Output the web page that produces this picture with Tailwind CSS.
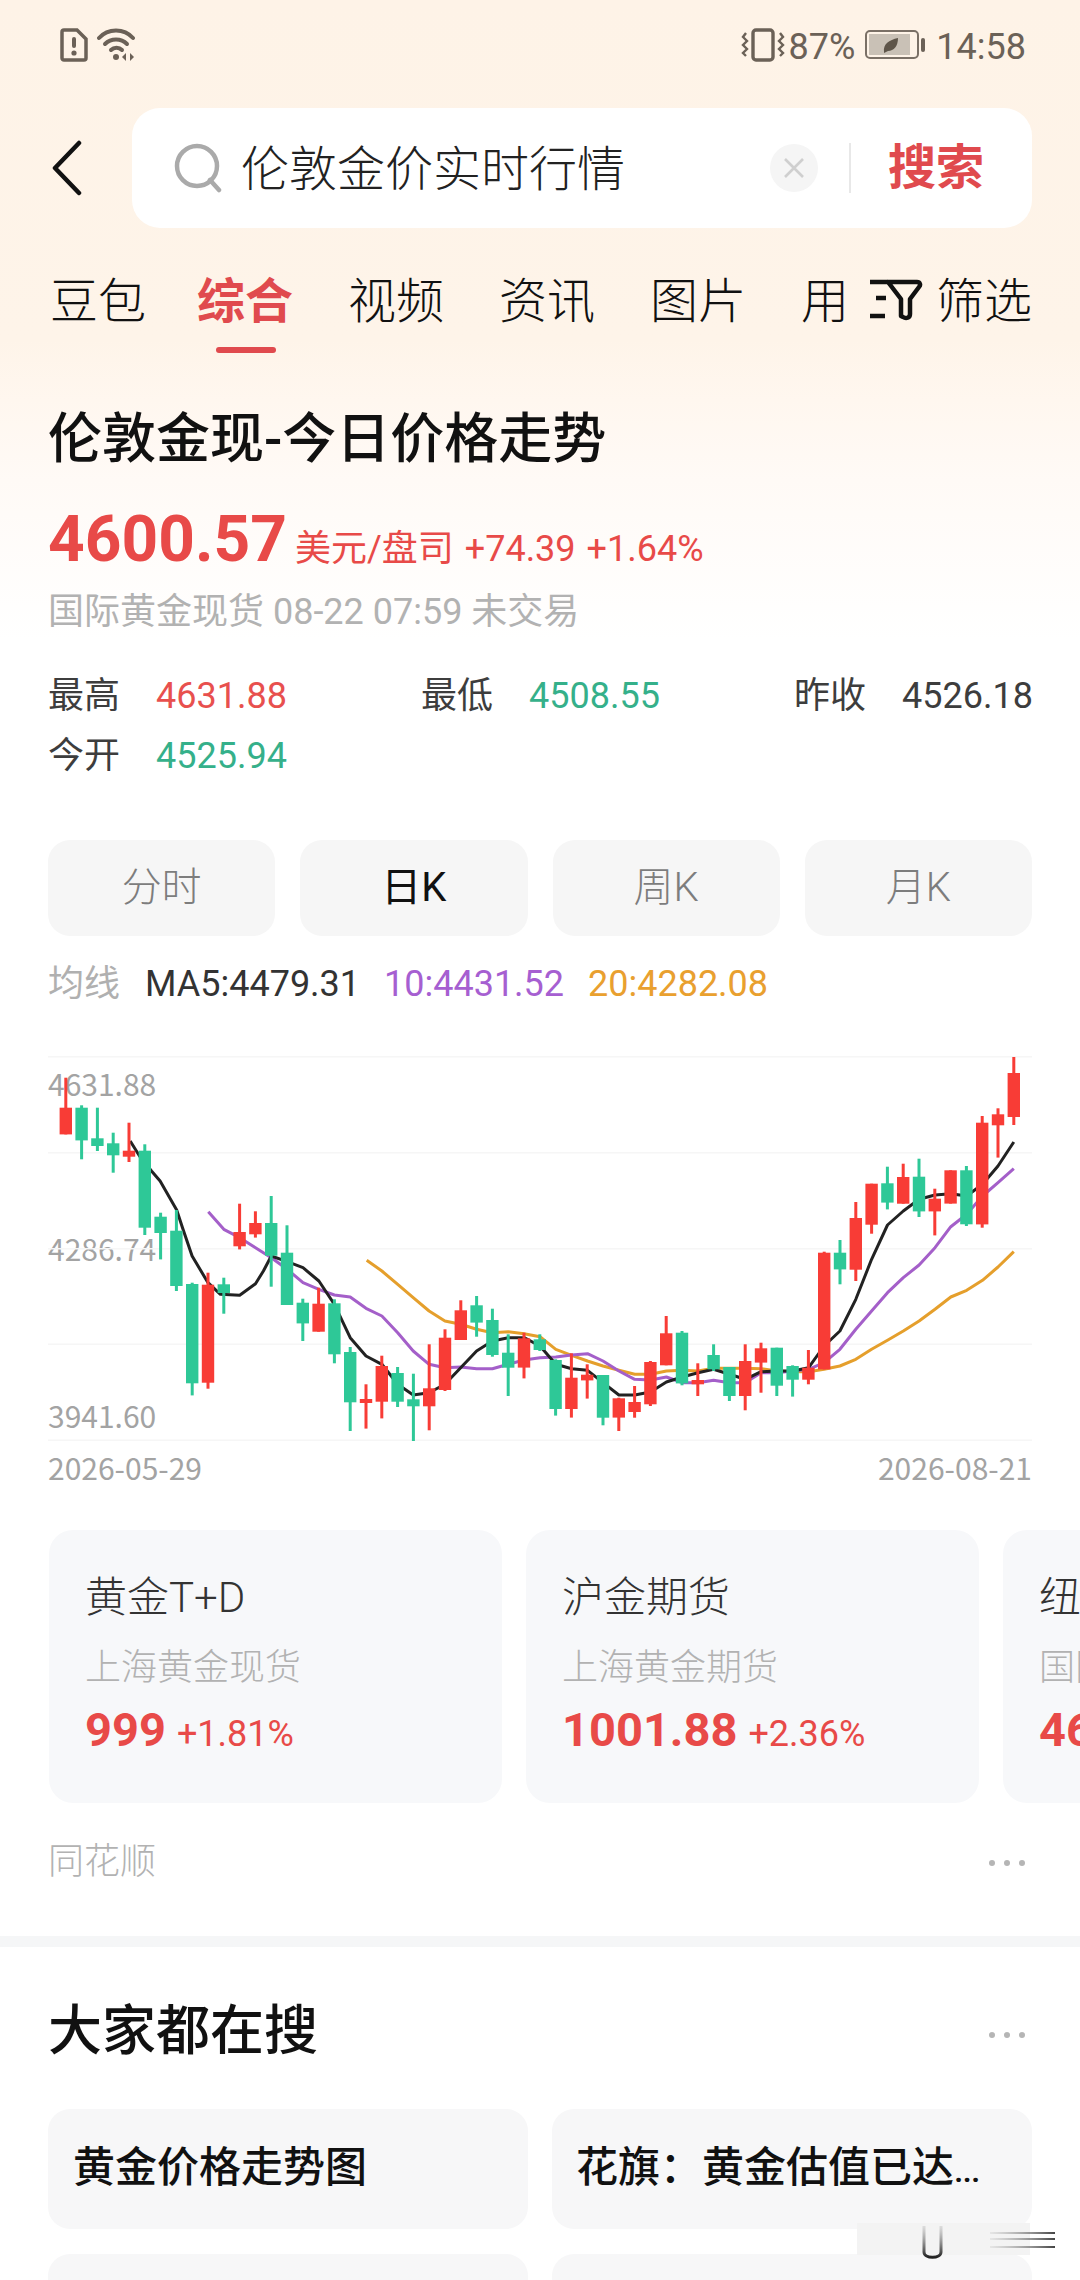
<!DOCTYPE html>
<html lang="zh-CN">
<head>
    <meta charset="UTF-8">
    <title>伦敦金价实时行情 - 搜索</title>
    <script src="https://cdn.jsdelivr.net/npm/@tailwindcss/browser@4"></script>
</head>
<body class="bg-white">
<div class="relative w-[1080px] h-[2280px] overflow-hidden font-['Roboto','Noto_Sans_CJK_SC',sans-serif] bg-[linear-gradient(to_bottom,#fef3e7_0px,#fef4e9_340px,#fff7ef_400px,#fffaf6_480px,#ffffff_640px)]">

    <!-- status bar -->
    <div class="h-[90px] pl-[60px] pr-[54px] flex items-center justify-between text-[#6b6157]">
        <div class="flex items-center gap-[9px]">
            <svg width="28" height="34" viewBox="0 0 28 34"><path d="M4 2h13l9 9v19a2 2 0 0 1-2 2H4a2 2 0 0 1-2-2V4a2 2 0 0 1 2-2z" fill="none" stroke="#6b6157" stroke-width="3.5"/><rect x="12" y="9" width="4" height="11" rx="2" fill="#6b6157"/><circle cx="14" cy="25" r="2.6" fill="#6b6157"/></svg>
            <svg width="40" height="34" viewBox="0 0 40 34" fill="none" stroke="#6b6157" stroke-width="4" stroke-linecap="round"><path d="M2 10C11 0 27 0 36 10"/><path d="M8 16c6-6 16-6 22 0"/><path d="M14 22c3-3 8-3 11 0"/><circle cx="19" cy="29" r="3" fill="#6b6157" stroke="none"/><path d="M25 29l4-4v8zM33 33v-8l4 4z" fill="#6b6157" stroke="none"/></svg>
        </div>
        <div class="flex items-center text-[36px] leading-none">
            <svg width="44" height="34" viewBox="0 0 44 34" fill="none" stroke="#6b6157" class="mr-[4px]"><rect x="12" y="2" width="20" height="30" rx="3" stroke-width="3.4"/><path d="M5 5l-3 4 4 4-4 4 4 4-4 4 3 3M39 5l3 4-4 4 4 4-4 4 4 4-3 3" stroke-width="2.4"/></svg>
            <span class="mt-[3px]">87%</span>
            <svg width="60" height="30" viewBox="0 0 60 30" class="ml-[10px] mr-[11px]"><rect x="1" y="1" width="52" height="27" rx="4" fill="none" stroke="#7a7066" stroke-width="2"/><rect x="4" y="4" width="41" height="21" fill="#c9c1b6"/><path d="M19 22c-1-8 5-12 14-14 0 8-4 13-10 13l-4 2z" fill="#5e5549"/><rect x="56" y="8" width="4" height="14" rx="2" fill="#6b6157"/></svg>
            <span class="mt-[3px]">14:58</span>
        </div>
    </div>

    <!-- search -->
    <div class="h-[120px] mt-[18px] flex items-center pl-[52px] pr-[48px]">
        <svg width="30" height="56" viewBox="0 0 30 56" fill="none" stroke="#111" stroke-width="4.5" stroke-linecap="round" stroke-linejoin="round" class="mr-[50px]"><path d="M27 3L3 28l24 25"/></svg>
        <div class="flex-1 h-[120px] bg-white rounded-[28px] flex items-center pl-[42px]">
            <svg width="50" height="50" viewBox="0 0 50 50" fill="none" stroke="#aaaaaa" stroke-width="4.5" class="mr-[17px]"><circle cx="23" cy="23" r="20"/><path d="M36 37l9 10" stroke-linecap="round"/></svg>
            <span class="text-[48px] leading-none mt-[4px] text-[#222] font-light">伦敦金价实时行情</span>
            <div class="ml-auto w-[48px] h-[48px] rounded-full bg-[#f5f5f5] flex items-center justify-center">
                <svg width="24" height="24" viewBox="0 0 24 24" stroke="#cfcfcf" stroke-width="2.6"><path d="M3 3l18 18M21 3L3 21"/></svg>
            </div>
            <div class="w-[2px] h-[50px] bg-[#e8e8e8] ml-[31px] mr-[37px]"></div>
            <span class="text-[48px] leading-none font-bold text-[#e04a4e] mr-[48px]">搜索</span>
        </div>
    </div>

    <!-- tabs -->
    <div class="relative h-[72px] mt-[38px] pl-[50px] flex items-center gap-[55px] text-[48px] leading-none text-[#111] font-light whitespace-nowrap">
        <span class="w-[92px]">豆包</span>
        <span class="w-[96px] font-bold text-[#e04a4e]">综合</span>
        <span class="w-[96px]">视频</span>
        <span class="w-[96px]">资讯</span>
        <span class="w-[96px]">图片</span>
        <span class="w-[46px]">用</span>
        <div class="absolute left-[869px] top-0 h-[72px] flex items-center">
            <svg width="54" height="44" viewBox="0 0 54 44" fill="none" stroke="#111" stroke-width="4.5" stroke-linejoin="round" class="-mt-[4px]"><path d="M1 4h18M7 20h10M1 38h15"/><path d="M19 4h29c3 0 4 3 2 5L41 21v15c0 4-4 5-7 3l-2-1V21L19 4z"/></svg>
            <span class="ml-[13px] w-[96px]">筛选</span>
        </div>
    </div>
    <div class="ml-[216px] mt-[9px] w-[60px] h-[6px] rounded-full bg-[#e04a4e]"></div>

    <!-- quote -->
    <div class="px-[48px]">
        <h1 class="mt-[56px] h-[62px] text-[54px] leading-[62px] font-medium text-[#111]">伦敦金现-今日价格走势</h1>
        <div class="mt-[33px] h-[72px] flex items-end text-[#e84a48]">
            <span class="text-[64px] leading-[72px] font-bold">4600.57</span>
            <span class="ml-[8px] text-[36px] leading-[54px]">美元/盘司</span>
            <span class="ml-[11px] text-[36px] leading-[54px]">+74.39</span>
            <span class="ml-[11px] text-[36px] leading-[54px]">+1.64%</span>
        </div>
        <p class="mt-[14px] text-[36px] leading-[44px] text-[#b2b2b2]">国际黄金现货 08-22 07:59 未交易</p>
        <div class="mt-[40px] grid grid-cols-[373px_373px_1fr] gap-y-[16px] text-[36px] leading-[44px] text-[#3d3d3d]">
            <div class="flex"><span class="w-[108px]">最高</span><span class="text-[#e8504e]">4631.88</span></div>
            <div class="flex"><span class="w-[108px]">最低</span><span class="text-[#35b08a]">4508.55</span></div>
            <div class="flex"><span class="w-[108px]">昨收</span><span>4526.18</span></div>
            <div class="flex"><span class="w-[108px]">今开</span><span class="text-[#35b08a]">4525.94</span></div>
        </div>
        <div class="mt-[62px] grid grid-cols-4 gap-[25px] text-[40px]">
            <div class="h-[96px] rounded-[22px] bg-[#f6f6f6] flex items-center justify-center text-[#7d7d7d] font-light">分时</div>
            <div class="h-[96px] rounded-[22px] bg-[#f6f6f6] flex items-center justify-center text-[#111]">日K</div>
            <div class="h-[96px] rounded-[22px] bg-[#f6f6f6] flex items-center justify-center text-[#7d7d7d] font-light">周K</div>
            <div class="h-[96px] rounded-[22px] bg-[#f6f6f6] flex items-center justify-center text-[#7d7d7d] font-light">月K</div>
        </div>
        <div class="mt-[24px] h-[48px] flex items-center text-[36px] leading-none">
            <span class="w-[97px] text-[#b0b0b0]">均线</span>
            <span class="w-[239px] text-[#333]">MA5:4479.31</span>
            <span class="w-[204px] text-[#a65fd1]">10:4431.52</span>
            <span class="text-[#e9a02f]">20:4282.08</span>
        </div>
    </div>

    <!-- chart -->
    <div class="relative mt-[48px] ml-[48px] w-[984px] h-[385px] font-['Noto_Sans_CJK_SC',sans-serif]">
        <span class="absolute left-0 top-[9px] text-[30px] leading-[36px] text-[#a3a3a3]">4631.88</span>
        <span class="absolute left-0 top-[174px] text-[30px] leading-[36px] text-[#a3a3a3]">4286.74</span>
        <span class="absolute left-0 top-[341px] text-[30px] leading-[36px] text-[#a3a3a3]">3941.60</span>
        <svg id="kline" class="absolute inset-0" width="984" height="385" viewBox="0 0 984 385"></svg>
    </div>
    <div class="mx-[48px] mt-[8px] h-[36px] flex justify-between text-[30px] leading-[36px] text-[#a3a3a3] font-['Noto_Sans_CJK_SC',sans-serif]">
        <span>2026-05-29</span><span>2026-08-21</span>
    </div>

    <!-- related quotes -->
    <div class="mt-[45px] pl-[49px] flex gap-[24px] overflow-hidden">
        <div class="shrink-0 w-[453px] h-[273px] rounded-[24px] bg-[#f7f8fa] pl-[36px] pt-[43px]">
            <div class="text-[42px] leading-[50px] text-[#333] font-light">黄金T+D</div>
            <div class="mt-[23px] text-[36px] leading-[44px] text-[#b2b2b2] font-light">上海黄金现货</div>
            <div class="mt-[12px] flex items-end text-[#e84a48] leading-none"><span class="text-[47px] leading-[56px] font-bold">999</span><span class="ml-[11px] text-[36px] leading-[48px]">+1.81%</span></div>
        </div>
        <div class="shrink-0 w-[453px] h-[273px] rounded-[24px] bg-[#f7f8fa] pl-[36px] pt-[43px]">
            <div class="text-[42px] leading-[50px] text-[#333] font-light">沪金期货</div>
            <div class="mt-[23px] text-[36px] leading-[44px] text-[#b2b2b2] font-light">上海黄金期货</div>
            <div class="mt-[12px] flex items-end text-[#e84a48] leading-none"><span class="text-[47px] leading-[56px] font-bold">1001.88</span><span class="ml-[11px] text-[36px] leading-[48px]">+2.36%</span></div>
        </div>
        <div class="shrink-0 w-[453px] h-[273px] rounded-[24px] bg-[#f7f8fa] pl-[36px] pt-[43px]">
            <div class="text-[42px] leading-[50px] text-[#333] font-light">纽约黄金</div>
            <div class="mt-[23px] text-[36px] leading-[44px] text-[#b2b2b2] font-light">国际黄金期货</div>
            <div class="mt-[12px] flex items-end text-[#e84a48] leading-none"><span class="text-[47px] leading-[56px] font-bold">4630.10</span></div>
        </div>
    </div>

    <!-- source -->
    <div class="mt-[38px] h-[44px] pl-[48px] pr-[55px] flex items-center justify-between">
        <span class="text-[36px] leading-none mb-[2px] text-[#b2b2b2] font-light">同花顺</span>
        <div class="flex gap-[9px]"><i class="w-[6px] h-[6px] rounded-full bg-[#b5b5b5]"></i><i class="w-[6px] h-[6px] rounded-full bg-[#b5b5b5]"></i><i class="w-[6px] h-[6px] rounded-full bg-[#b5b5b5]"></i></div>
    </div>
    <div class="mt-[51px] h-[11px] bg-[#f5f6f7]"></div>

    <!-- people also search -->
    <div class="mt-[55px] h-[66px] pl-[48px] pr-[55px] flex items-center justify-between">
        <h2 class="text-[54px] leading-none mb-[6px] font-medium text-[#111]">大家都在搜</h2>
        <div class="flex gap-[9px]"><i class="w-[6px] h-[6px] rounded-full bg-[#b5b5b5]"></i><i class="w-[6px] h-[6px] rounded-full bg-[#b5b5b5]"></i><i class="w-[6px] h-[6px] rounded-full bg-[#b5b5b5]"></i></div>
    </div>
    <div class="mt-[41px] mx-[48px] grid grid-cols-2 gap-x-[24px] gap-y-[25px]">
        <div class="h-[120px] pb-[4px] rounded-[22px] bg-[#f7f7f8] pl-[25px] flex items-center text-[42px] font-medium text-[#111]">黄金价格走势图</div>
        <div class="h-[120px] pb-[4px] rounded-[22px] bg-[#f7f7f8] pl-[24px] flex items-center text-[42px] font-medium text-[#111]"><span>花旗：黄金估值已达<span class="text-[34px] tracking-[-1px]">...</span></span></div>
        <div class="h-[120px] rounded-[22px] bg-[#f7f7f8]"></div>
        <div class="h-[120px] rounded-[22px] bg-[#f7f7f8]"></div>
    </div>

    <!-- screenshot artefact over the bottom corner -->
    <div class="absolute left-[857px] top-[2223px] w-[173px] h-[32px] bg-[#f3f3f3]"></div>
    <svg class="absolute left-[920px] top-[2222px]" width="140" height="40" viewBox="0 0 140 40" fill="none">
        <defs>
            <linearGradient id="uFade" x1="0" y1="0" x2="0" y2="1"><stop offset="0" stop-color="#999" stop-opacity=".25"/><stop offset="1" stop-color="#222"/></linearGradient>
            <linearGradient id="lineFade" gradientUnits="userSpaceOnUse" x1="70" y1="0" x2="135" y2="0"><stop offset="0" stop-color="#999" stop-opacity=".15"/><stop offset="1" stop-color="#444"/></linearGradient>
        </defs>
        <path d="M4 4v26c0 7 17 7 17 0V4" stroke="url(#uFade)" stroke-width="3"/>
        <rect x="70" y="10" width="65" height="2" fill="url(#lineFade)"/>
        <rect x="70" y="16" width="65" height="2" fill="url(#lineFade)"/>
        <rect x="70" y="24" width="65" height="2" fill="url(#lineFade)"/>
    </svg>
</div>

<script>
    // every y below is measured on the reference crop: page y = 1020 + v / 3, chart starts at page y 1055
    const toY = v => 1020 + v / 3 - 1055;
    const toX = i => 17.8 + 15.8 * i;
    // page x of the crop values for the moving averages
    const lx = (v, right) => (right ? 540 + v / 2.904 : v / 2.904) - 48;

    const candles = [
        ['r',170,340,260,340],['g',253,415,260,358],['g',260,390,352,375],['g',335,455,367,403],['r',305,423,389,407],
        ['g',370,642,389,620],['g',575,715,587,636],['g',567,810,629,795],['g',785,1123,789,1087],['r',755,1103,791,1085],
        ['g',770,878,790,816],['r',548,685,633,676],['r',571,650,606,640],['g',525,797,606,704],['g',613,852,695,852],
        ['g',833,960,845,907],['r',800,932,848,932],['g',835,1027,847,1000],['g',978,1230,993,1144],['r',1090,1223,1134,1146],
        ['r',1004,1192,1035,1142],['g',1038,1158,1056,1142],['g',1058,1260,1135,1156],['r',970,1228,1102,1156],['r',925,1110,950,1107],
        ['r',838,957,868,957],['g',825,947,853,905],['g',863,1007,897,1002],['g',940,1125,995,1040],['r',935,1072,952,1040],
        ['g',940,990,955,987],['g',1015,1184,1017,1164],['r',997,1190,1070,1164],['r',1030,1133,1061,1078],['g',1062,1213,1062,1190],
        ['r',1130,1230,1132,1190],['r',1095,1190,1143,1173],['r',1020,1155,1023,1150],['r',885,1033,937,1033],['g',930,1093,935,1087],
        ['r',1027,1125,1077,1090],['g',970,1050,1002,1045],['g',1038,1140,1038,1125],['r',970,1168,1020,1125],['r',965,1115,982,1025],
        ['g',980,1125,980,1094],['g',1033,1127,1035,1076],['r',987,1090,1040,1076],['r',692,1045,695,1045],['g',657,790,695,745],
        ['r',543,780,591,746],['r',488,638,488,611],['g',437,565,487,545],['r',428,548,468,548],['g',413,588,467,571],
        ['r',503,643,533,571],['r',448,548,448,548],['g',435,615,448,610],['r',285,620,305,610],['r',262,410,280,313],['r',108,312,156,288]
    ];

    const ma = [
        { color: '#e59f2c', left: [[1065,718],[1109,750],[1155,790],[1200,830],[1246,870],[1292,900],[1338,910],[1384,925],[1430,935],[1476,932],[1522,938]],
          right: [[0,947],[46,985],[92,1003],[138,1020],[183,1035],[229,1048],[275,1060],[321,1060],[367,1050],[413,1048],[459,1050],[504,1042],[550,1042],[596,1042],[642,1043],[688,1050],[734,1052],[780,1052],[825,1045],[871,1035],[917,1015],[963,985],[1009,958],[1055,930],[1101,900],[1147,865],[1193,828],[1239,808],[1285,778],[1330,738],[1376,692]] },
        { color: '#a45fc9', left: [[605,572],[650,625],[696,650],[742,680],[788,710],[834,745],[880,785],[926,805],[971,822],[1017,828],[1063,862],[1109,885],[1155,935],[1200,990],[1246,1030],[1292,1040],[1338,1038],[1384,1043],[1430,1043],[1476,1030],[1522,1017]],
          right: [[0,1010],[46,1008],[92,1002],[138,998],[183,1020],[229,1050],[275,1075],[321,1077],[367,1068],[413,1085],[459,1085],[504,1078],[550,1085],[596,1085],[642,1055],[688,1055],[734,1050],[780,1045],[825,1025],[871,985],[917,925],[963,870],[1009,815],[1055,770],[1101,732],[1147,680],[1193,617],[1239,580],[1285,525],[1330,485],[1376,443]] },
        { color: '#222222', left: [[378,360],[405,405],[440,450],[465,480],[513,567],[530,620],[558,705],[604,785],[640,820],[696,823],[742,788],[765,750],[788,705],[834,722],[880,740],[926,780],[971,850],[1017,950],[1063,1005],[1109,1030],[1155,1090],[1200,1122],[1246,1115],[1292,1090],[1338,1040],[1384,990],[1430,960],[1476,950],[1522,950]],
          right: [[0,975],[46,1030],[92,1043],[138,1048],[183,1085],[229,1122],[275,1122],[321,1113],[367,1083],[413,1068],[459,1055],[504,1045],[550,1060],[596,1075],[642,1052],[688,1050],[734,1050],[780,1040],[825,975],[871,930],[917,835],[963,715],[1009,612],[1055,570],[1101,535],[1147,522],[1193,518],[1239,525],[1285,490],[1330,435],[1376,363]] }
    ];

    let out = '';
    [1, 97, 193, 288.5, 384.5].forEach(y => {
        out += `<rect x="0" y="${y - 1}" width="984" height="1.5" fill="#f6f6f6"/>`;
    });
    ma.forEach(m => {
        const pts = m.left.map(p => [lx(p[0], false), toY(p[1])]).concat(m.right.map(p => [lx(p[0], true), toY(p[1])]));
        out += `<polyline points="${pts.map(p => p[0].toFixed(1) + ',' + p[1].toFixed(1)).join(' ')}" fill="none" stroke="${m.color}" stroke-width="3" stroke-linejoin="round"/>`;
    });
    candles.forEach((c, i) => {
        const fill = c[0] === 'r' ? '#f83c36' : '#2ec897';
        const x = toX(i);
        out += `<rect x="${(x - 1.5).toFixed(1)}" y="${toY(c[1]).toFixed(1)}" width="3" height="${((c[2] - c[1]) / 3).toFixed(1)}" fill="${fill}"/>`;
        out += `<rect x="${(x - 6.2).toFixed(1)}" y="${toY(c[3]).toFixed(1)}" width="12.4" height="${((c[4] - c[3]) / 3).toFixed(1)}" fill="${fill}"/>`;
    });
    document.getElementById('kline').innerHTML = out;
</script>
</body>
</html>
